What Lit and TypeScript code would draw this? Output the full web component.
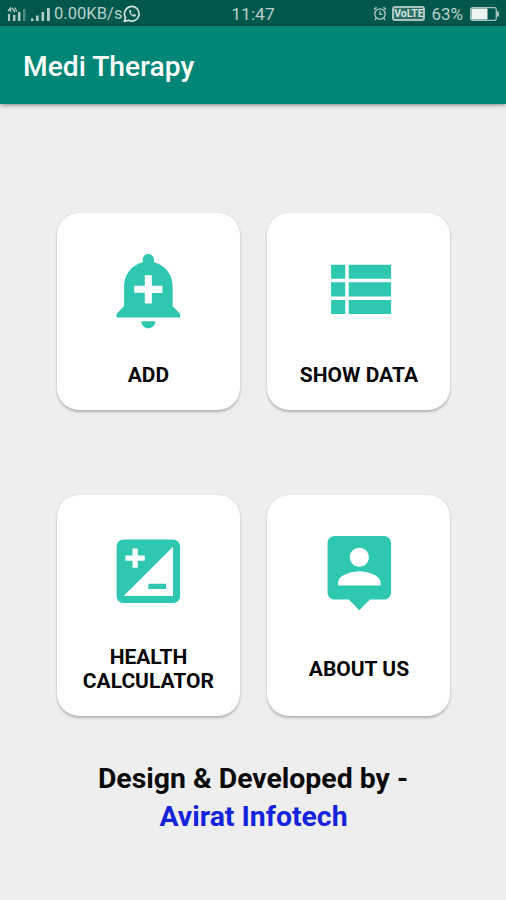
import { LitElement, html, css, svg } from "lit";
import { customElement, property } from "lit/decorators.js";

const icons: Record<string, string> = {
  addAlert:
    "M10.01 21.01c0 1.1.89 1.99 1.99 1.99s1.99-.89 1.99-1.99h-3.98zm8.87-4.19V11c0-3.25-2.25-5.97-5.29-6.69v-.72C13.59 2.71 12.88 2 12 2s-1.59.71-1.59 1.59v.72C7.37 5.03 5.12 7.75 5.12 11v5.82L3 18.94V20h18v-1.06l-2.12-2.12zM16 13.01h-3v3h-2V13H8v-2h3V8h2v3h3v2.01z",
  list: "M4 14h4v-4H4v4zm0 5h4v-4H4v4zM4 9h4V5H4v4zm5 5h12v-4H9v4zm0 5h12v-4H9v4zM9 5v4h12V5H9z",
  exposure:
    "M19 3H5c-1.1 0-2 .9-2 2v14c0 1.1.9 2 2 2h14c1.1 0 2-.9 2-2V5c0-1.1-.9-2-2-2zM5.5 7.5h2v-2H9v2h2V9H9v2H7.5V9h-2V7.5zM19 19H5L19 5v14zm-2-2v-1.5h-5V17h5z",
  person:
    "M19 2H5c-1.11 0-2 .9-2 2v14c0 1.1.89 2 2 2h4l3 3 3-3h4c1.1 0 2-.9 2-2V4c0-1.1-.9-2-2-2zm-7 3.3c1.49 0 2.7 1.21 2.7 2.7 0 1.49-1.21 2.7-2.7 2.7-1.49 0-2.7-1.21-2.7-2.7 0-1.49 1.21-2.7 2.7-2.7zM18 16H6v-.9c0-2 4-3.1 6-3.1s6 1.1 6 3.1v.9z",
};

@customElement("status-bar")
class StatusBar extends LitElement {
  static styles = css`
    :host {
      display: grid;
      grid-template-columns: 1fr auto 1fr;
      align-items: center;
      height: 26px;
      box-sizing: border-box;
      padding: 1px 7px 0 7px;
      background: #00574b;
      color: #b9d1cc;
      font-size: 17.4px;
      line-height: 24px;
    }
    .side {
      display: flex;
      align-items: center;
    }
    .end {
      justify-content: flex-end;
    }
    svg {
      display: block;
      flex: none;
    }
    .speed {
      margin-left: 4px;
      font-size: 16.6px;
      white-space: nowrap;
    }
    .volte {
      box-sizing: border-box;
      width: 33px;
      height: 15px;
      margin: 0 6px 0 5px;
      border: 2px solid #a9c4bf;
      border-radius: 3px;
      background: #2c6d62;
      color: #d3e3e0;
      font-size: 10.5px;
      font-weight: 700;
      line-height: 12px;
      display: flex;
      justify-content: center;
    }
    .percent {
      margin-right: 7px;
      font-size: 17px;
    }
  `;
  render() {
    return html`
      <div class="side">
        <svg width="43" height="18" viewBox="0 0 43 18" fill="#b5cdc8">
          <path d="M1 9h2v7H1zM6 10h2.4v6H6zM11 7h2.4v9H11z" />
          <path d="M16 4h2.4v12H16z" opacity=".45" />
          <path d="M1 6l2.500-3v4M5 3l3 4M7.500 2.500l2.500 4" fill="none" stroke="#b5cdc8" stroke-width="1.3" />
          <path d="M24 13.5h2.6V16H24zM29 10.5h2.6V16H29zM34.500 7h2.6v9h-2.6zM40 3h2.800v13H40z" />
        </svg>
        <span class="speed">0.00KB/s</span>
        <svg width="18" height="18" viewBox="0 0 18 18" fill="none" stroke="#d3e3e0">
          <path d="M1.300 16.500l1.200-4A7.300 7.300 0 1 1 5.500 15.300z" stroke-width="1.700" stroke-linejoin="round" />
          <path d="M6.300 5.300c-.6 3 2.500 6.500 5.800 6.500l1-1.800-2-1-1 .9C8.800 9.300 8 8.400 7.600 7.500l.8-.9-.9-1.800z" fill="#d3e3e0" stroke="none" />
        </svg>
      </div>
      <span>11:47</span>
      <div class="side end">
        <svg width="14" height="15" viewBox="0 0 14 15" fill="none" stroke="#b5cdc8" stroke-width="1.300">
          <circle cx="7" cy="8" r="5.200" />
          <path d="M7 5v3.300h2.500M1 3.500L3.500 1.200M13 3.500L10.500 1.200M3 12.500L1.800 14M11 12.500l1.200 1.500" />
        </svg>
        <span class="volte">VoLTE</span>
        <span class="percent">63%</span>
        <svg width="29" height="14" viewBox="0 0 29 14">
          <rect x=".7" y=".7" width="25.600" height="12.600" rx="1.800" fill="none" stroke="#a9c4bf" stroke-width="1.300" />
          <path d="M1.500 1.500h16v11h-16z" fill="#edf4f2" />
          <path d="M27 4.500h2v5h-2z" fill="#a9c4bf" />
        </svg>
      </div>
    `;
  }
}

@customElement("menu-card")
class MenuCard extends LitElement {
  @property() icon = "";
  @property() label = "";
  static styles = css`
    :host {
      display: flex;
      flex-direction: column;
      align-items: center;
      box-sizing: border-box;
      padding: 34.5px 14px 22px;
      border-radius: 22px;
      background: #fff;
      box-shadow: 0 1.5px 2.5px rgba(0, 0, 0, 0.25);
    }
    svg {
      display: block;
      width: 84.7px;
      height: 84.7px;
      flex: none;
      fill: #2ec8b0;
    }
    .label {
      flex: 1;
      display: flex;
      align-items: center;
      margin-top: 30.5px;
      color: #050505;
      font-size: 21px;
      font-weight: 700;
      line-height: 24.6px;
      text-align: center;
    }
  `;
  render() {
    return html`
      <svg viewBox="0 0 24 24">${svg`<path d=${icons[this.icon]} />`}</svg>
      <span class="label">${this.label}</span>
    `;
  }
}

@customElement("app-root")
class AppRoot extends LitElement {
  static styles = css`
    :host {
      display: flex;
      flex-direction: column;
      height: 900px;
      overflow: hidden;
      background: #eee;
      font-family: Roboto, "Liberation Sans", sans-serif;
    }
    .toolbar {
      display: flex;
      align-items: center;
      flex: none;
      height: 78px;
      box-sizing: border-box;
      padding: 3px 23px 0;
      background: #008577;
      box-shadow: 0 1px 4px rgba(0, 0, 0, 0.45);
      color: #fff;
      font-size: 28.2px;
      font-weight: 500;
    }
    .grid {
      display: grid;
      grid-template-columns: 183px 183px;
      grid-template-rows: 197px 221.5px;
      gap: 85px 27.5px;
      justify-content: center;
      margin-top: 108.5px;
      padding-left: 1.4px;
    }
    .credits {
      margin-top: 44.4px;
      font-size: 28.4px;
      font-weight: 700;
      line-height: 38px;
      text-align: center;
      color: #0a0a0a;
    }
    .company {
      padding-left: 1px;
      color: #1424dc;
    }
  `;
  render() {
    return html`
      <status-bar></status-bar>
      <header class="toolbar">Medi Therapy</header>
      <main class="grid">
        <menu-card icon="addAlert" label="ADD"></menu-card>
        <menu-card icon="list" label="SHOW DATA"></menu-card>
        <menu-card icon="exposure" label="HEALTH CALCULATOR"></menu-card>
        <menu-card icon="person" label="ABOUT US"></menu-card>
      </main>
      <footer class="credits">
        <div>Design &amp; Developed by -</div>
        <div class="company">Avirat Infotech</div>
      </footer>
    `;
  }
}
